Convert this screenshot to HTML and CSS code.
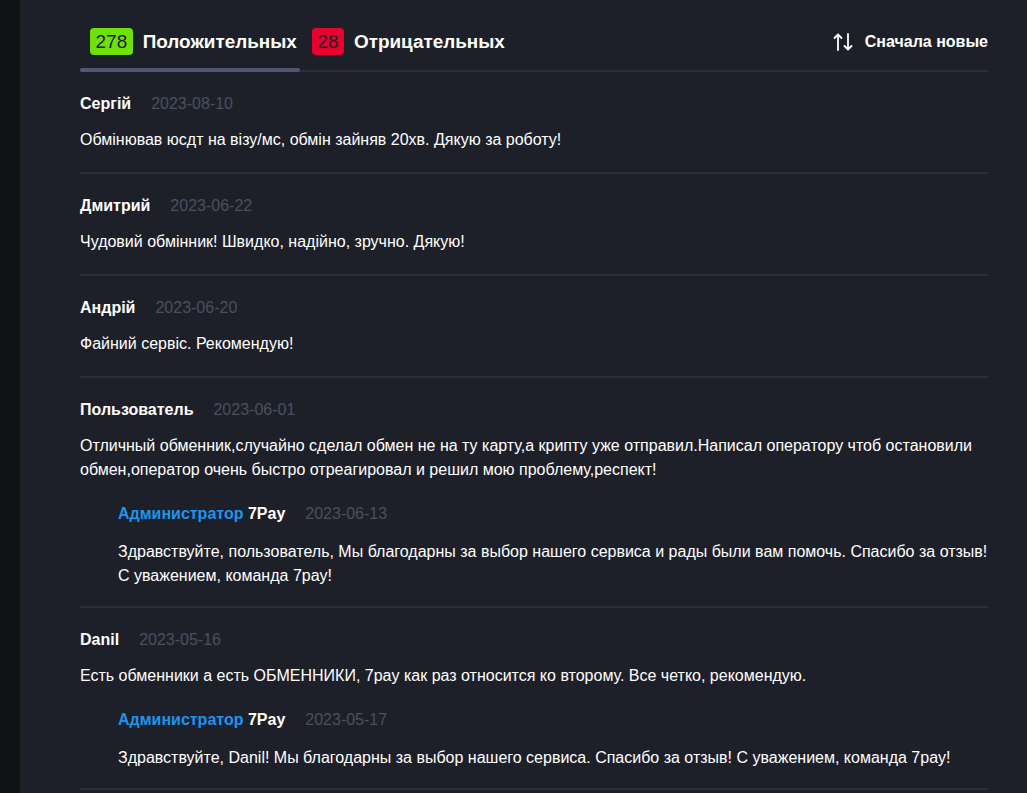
FILE: index.html
```html
<!DOCTYPE html>
<html>
<head>
<meta charset="utf-8">
<link rel="stylesheet" href="styles.css">
</head>
<body>
<div class="layout">
  <div class="side"></div>
  <main class="main">
    <div class="tabs">
      <div class="tab-list">
        <div class="tab active"><span class="badge green">278</span><span class="tab-label">Положительных</span></div>
        <div class="tab"><span class="badge red">28</span><span class="tab-label">Отрицательных</span></div>
      </div>
      <div class="sort">
        <svg class="sort-icon" width="20" height="20" viewBox="0 0 20 20" fill="none" stroke="#fff" stroke-width="1.8" stroke-linecap="round" stroke-linejoin="round">
          <path d="M5 18V2.5M1.5 6L5 2.5 8.5 6"/>
          <path d="M15 2v15.5M11.5 14L15 17.5 18.5 14"/>
        </svg>
        <span>Сначала новые</span>
      </div>
    </div>
    <div class="tab-line"><div class="tab-line-active"></div></div>

    <div class="review">
      <div class="head"><span class="name">Сергій</span><span class="date">2023-08-10</span></div>
      <p class="text">Обмінював юсдт на візу/мс, обмін зайняв 20хв. Дякую за роботу!</p>
    </div>
    <div class="review">
      <div class="head"><span class="name">Дмитрий</span><span class="date">2023-06-22</span></div>
      <p class="text">Чудовий обмінник! Швидко, надійно, зручно. Дякую!</p>
    </div>
    <div class="review">
      <div class="head"><span class="name">Андрій</span><span class="date">2023-06-20</span></div>
      <p class="text">Файний сервіс. Рекомендую!</p>
    </div>
    <div class="review">
      <div class="head"><span class="name">Пользователь</span><span class="date">2023-06-01</span></div>
      <p class="text">Отличный обменник,случайно сделал обмен не на ту карту,а крипту уже отправил.Написал оператору чтоб остановили обмен,оператор очень быстро отреагировал и решил мою проблему,респект!</p>
      <div class="reply">
        <div class="head"><span class="name"><span class="admin">Администратор</span> 7Pay</span><span class="date">2023-06-13</span></div>
        <p class="text">Здравствуйте, пользователь, Мы благодарны за выбор нашего сервиса и рады были вам помочь. Спасибо за отзыв! С уважением, команда 7pay!</p>
      </div>
    </div>
    <div class="review">
      <div class="head"><span class="name">Danil</span><span class="date">2023-05-16</span></div>
      <p class="text">Есть обменники а есть ОБМЕННИКИ, 7pay как раз относится ко второму. Все четко, рекомендую.</p>
      <div class="reply">
        <div class="head"><span class="name"><span class="admin">Администратор</span> 7Pay</span><span class="date">2023-05-17</span></div>
        <p class="text">Здравствуйте, Danil! Мы благодарны за выбор нашего сервиса. Спасибо за отзыв! С уважением, команда 7pay!</p>
      </div>
    </div>
  </main>
</div>
</body>
</html>
```
FILE: styles.css
```css
html, body {
  margin: 0;
  padding: 0;
  height: 100%;
  overflow: hidden;
}
body {
  background: #1e2029;
  color: #fff;
  font-family: "Liberation Sans", Arial, sans-serif;
}
.layout {
  display: flex;
  min-height: 100%;
}
.side {
  width: 20px;
  flex: none;
  background: #111214;
}
.main {
  flex: 1;
  padding: 0 39px 0 60px;
}
.tabs {
  display: flex;
  align-items: center;
  justify-content: space-between;
  padding-top: 28px;
  height: 27px;
}
.tab-list {
  display: flex;
  align-items: center;
  padding-left: 10px;
  gap: 15px;
}
.tab {
  display: flex;
  align-items: center;
  gap: 10px;
}
.badge {
  display: inline-block;
  height: 27px;
  line-height: 27px;
  padding: 0 5.5px;
  border-radius: 4px;
  font-size: 19px;
  color: #1e2029;
}
.green { background: #6fe10a; }
.red { background: #e8002e; }
.tab-label {
  font-size: 18.9px;
  font-weight: bold;
  color: #fff;
}
.sort {
  display: flex;
  align-items: center;
  gap: 12px;
  font-size: 16px;
  font-weight: bold;
}
.sort-icon { display: block; }
.tab-line {
  margin-top: 15px;
  height: 2px;
  background: #2c2f3a;
  position: relative;
}
.tab-line-active {
  position: absolute;
  left: 0;
  top: -2px;
  width: 220px;
  height: 4px;
  border-radius: 2px;
  background: #525870;
}
.review {
  border-bottom: 2px solid #2c2f3a;
  padding: 22px 0 20px;
}
.head {
  display: flex;
  align-items: baseline;
  gap: 20px;
  font-size: 16px;
  line-height: 20px;
}
.name {
  font-weight: bold;
  color: #fff;
}
.admin { color: #1a95f0; }
.date {
  color: #4a4f61;
  font-size: 16px;
}
.text {
  margin: 14px 0 0;
  font-size: 16px;
  line-height: 24px;
  color: #fff;
}
.reply {
  padding-left: 38px;
  margin-top: 22px;
  margin-bottom: -2px;
}
.reply .text { margin-top: 16px; }
```
